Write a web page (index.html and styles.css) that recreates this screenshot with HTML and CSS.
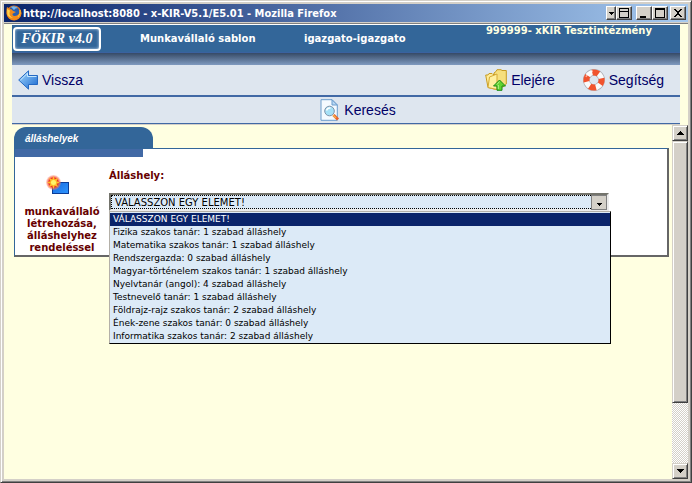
FILE: index.html
```
<!DOCTYPE html>
<html lang="hu">
<head>
  <meta charset="UTF-8" />
  <title>x-KIR-V5.1/E5.01</title>
  <link rel="stylesheet" href="styles.css">
</head>
<body>
  <div class="window">
    <div class="titlebar">
      <svg class="fox" viewBox="0 0 16 16">
        <circle cx="8" cy="8" r="7.5" fill="#e8761a"/>
        <circle cx="8" cy="6.5" r="5.3" fill="#2c5fae"/>
        <path d="M5 2 Q8 0 12 3 Q9 3 8 5Z" fill="#78b7ea"/>
        <path d="M1 2 L4 4 Q6 4 7 6 L10 7 L7 8.5 Q6 9 7 10.5 Q10 12 13 9 Q15 6 13 3 Q17 8 14 12 Q10 17 4 14 Q-1 10 1 2Z" fill="#f28a1c"/>
        <path d="M1 4 L4 5.5 L3.5 8 Q3 11 7 13 Q3.5 13 1.5 10Z" fill="#ffd34a"/>
        <path d="M14 5 Q15 9 12 12" fill="none" stroke="#ffc83a"/>
      </svg>
      <span class="title">http://localhost:8080 - x-KIR-V5.1/E5.01 - Mozilla Firefox</span>
      <div class="win-buttons">
        <button type="button" class="win-btn narrow" aria-label="Menu"><svg viewBox="0 0 5 10"><path d="M0 4h5v1h-1v1h-1v1h-1v-1h-1v-1h-1z"/></svg></button>
        <button type="button" class="win-btn tray" aria-label="Tray"><svg viewBox="0 0 10 10"><path d="M0 0h10v10h-10zM1 1v2h8v-2zM1 4v5h8v-5z" fill-rule="evenodd"/></svg></button>
        <button type="button" class="win-btn" aria-label="Minimize"><svg viewBox="0 0 10 10"><path d="M1 8h6v2h-6z"/></svg></button>
        <button type="button" class="win-btn max" aria-label="Maximize"><svg viewBox="0 0 10 10"><path d="M0 0h10v10h-10zM1 2v7h8v-7z" fill-rule="evenodd"/></svg></button>
        <button type="button" class="win-btn" aria-label="Close"><svg viewBox="0 0 10 10"><path d="M1 1h2v1h1v1h2v-1h1v-1h2v1h-1v1h-1v1h-1v2h1v1h1v1h1v1h-2v-1h-1v-1h-2v1h-1v1h-2v-1h1v-1h1v-1h1v-2h-1v-1h-1v-1h-1z"/></svg></button>
      </div>
    </div>

    <div class="page">
      <div class="top">
        <header class="header">
          <div class="logo">FÖKIR v4.0</div>
          <span>Munkavállaló sablon</span>
          <span>igazgato-igazgato</span>
          <span class="school">999999- xKIR Tesztintézmény</span>
        </header>
        <div class="shade"></div>
        <nav class="toolbar">
          <a class="tool" href="#">
            <svg class="arrow" viewBox="0 0 20 20">
              <defs><linearGradient id="blue" x2="1" y2="1"><stop offset="0" stop-color="#a8dcff"/><stop offset="1" stop-color="#1767cf"/></linearGradient></defs>
              <path d="M.7 10 L10.5.8 V5.5 H19.5 V14.5 H10.5 V19.2Z" fill="url(#blue)" stroke="#2469c4"/>
              <path d="M2.5 10 L9.5 3.2 V6.5 H18.5" fill="none" stroke="#c4e8ff"/>
            </svg>
            Vissza
          </a>
          <a class="tool push" href="#">
            <svg class="icon" viewBox="0 0 22 22">
              <path d="M9 4 L11 2.5 L12 .7 H16 L17 1.5 H21.3 V15 L18 18 H9Z" fill="#f6df7d" stroke="#c79b20"/>
              <path d="M.7 6 H3 L4 4.5 H7 L8 5.5 H11 V20.5 L3 18.5Z" fill="#ffec98" stroke="#c79b20"/>
              <path d="M3 18.5 L4.5 8 L12 5 V20.5Z" fill="#fff0a0" stroke="#d4aa36"/>
              <path d="M14.5 11 L20.5 17 H17 V21.3 H12 V17 H8.5Z" fill="#62d32f" stroke="#198b16"/>
              <path d="M14.5 12.5 L12 15.5 M13.3 16 V20" stroke="#b8f58b" fill="none"/>
            </svg>
            Elejére
          </a>
          <a class="tool" href="#">
            <svg class="icon" viewBox="0 0 22 22">
              <circle cx="11" cy="11" r="7.6" fill="none" stroke="#a9aab0" stroke-width="6.6"/>
              <circle cx="11" cy="11" r="7.6" fill="none" stroke="#fafafa" stroke-width="5.4"/>
              <circle cx="11" cy="11" r="7.6" fill="none" stroke="#f1532d" stroke-width="6" stroke-dasharray="6.5 5.44" stroke-dashoffset="2"/>
              <path d="M3 8 Q5 3 10 2" fill="none" stroke="#fff" stroke-opacity=".5" stroke-width="1.5"/>
            </svg>
            Segítség
          </a>
        </nav>
        <nav class="toolbar search">
          <a class="tool" href="#">
            <svg class="doc" viewBox="0 0 20 22">
              <path d="M1 .7 H12 L17.3 6 V21.3 H1Z" fill="#f4faff" stroke="#6c9dcc"/>
              <path d="M12 .7 V6 H17.3Z" fill="#b9d8f4" stroke="#6c9dcc"/>
              <path d="M13.5 16 L18 20.5" stroke="#e8632b" stroke-width="3"/>
              <path d="M13 16 L16 19" stroke="#f7b04b" stroke-width="1.5"/>
              <circle cx="9.5" cy="12" r="4.8" fill="#a5e0f6" stroke="#7f92a8"/>
              <path d="M6.5 11.5 Q7.5 8.5 10.5 9" fill="none" stroke="#fff" stroke-width="1.5"/>
            </svg>
            Keresés
          </a>
        </nav>
      </div>

      <div class="frame">
        <main class="content">
          <h1 class="tab">álláshelyek</h1>
          <div class="panel">
            <div class="strip"></div>
            <div class="panel-body">
              <a class="action" href="#">
                <svg viewBox="0 0 24 20">
                  <defs>
                    <linearGradient id="box" x2="1" y2="1"><stop offset="0" stop-color="#1768dc"/><stop offset="1" stop-color="#2f96ff"/></linearGradient>
                    <radialGradient id="glow"><stop offset=".6" stop-color="#f03a20"/><stop offset="1" stop-color="#ff8a70" stop-opacity=".3"/></radialGradient>
                  </defs>
                  <rect x="6.5" y="7.5" width="16" height="11" fill="url(#box)" stroke="#0b3c96"/>
                  <circle cx="7.5" cy="7.5" r="7.5" fill="url(#glow)"/>
                  <path d="M7.5 1 L8.7 4.6 L12 3 L10.5 6.3 L14 7.5 L10.5 8.7 L12 12 L8.7 10.5 L7.5 14 L6.3 10.5 L3 12 L4.6 8.7 L1 7.5 L4.6 6.3 L3 3 L6.3 4.6Z" fill="#ffc329"/>
                  <circle cx="7.5" cy="7.5" r="2.5" fill="#fff36a"/>
                </svg>
                munkavállaló létrehozása, álláshelyhez rendeléssel
              </a>
              <form class="field">
                <label for="allashely">Álláshely:</label>
                <div class="combo">
                  <select id="allashely">
                    <option>VÁLASSZON EGY ELEMET!</option>
                  </select>
                  <span class="combo-arrow"><svg viewBox="0 0 5 3"><path d="M0 0h5v1h-1v1h-1v1h-1v-1h-1v-1h-1z"/></svg></span>
                  <ul class="options" role="listbox" aria-label="Álláshely">
                    <li class="selected" role="option" aria-selected="true">VÁLASSZON EGY ELEMET!</li>
                    <li role="option">Fizika szakos tanár: 1 szabad álláshely</li>
                    <li role="option">Matematika szakos tanár: 1 szabad álláshely</li>
                    <li role="option">Rendszergazda: 0 szabad álláshely</li>
                    <li role="option">Magyar-történelem szakos tanár: 1 szabad álláshely</li>
                    <li role="option">Nyelvtanár (angol): 4 szabad álláshely</li>
                    <li role="option">Testnevelő tanár: 1 szabad álláshely</li>
                    <li role="option">Földrajz-rajz szakos tanár: 2 szabad álláshely</li>
                    <li role="option">Ének-zene szakos tanár: 0 szabad álláshely</li>
                    <li role="option">Informatika szakos tanár: 2 szabad álláshely</li>
                  </ul>
                </div>
              </form>
            </div>
          </div>
        </main>
        <div class="scrollbar">
          <button type="button" class="scroll-btn" aria-label="Up"><svg viewBox="0 0 7 4"><path d="M3 0h1v1h1v1h1v1h1v1h-7v-1h1v-1h1v-1h1z"/></svg></button>
          <div class="thumb"></div>
          <div class="track"></div>
          <button type="button" class="scroll-btn" aria-label="Down"><svg viewBox="0 0 7 4"><path d="M0 0h7v1h-1v1h-1v1h-1v1h-1v-1h-1v-1h-1v-1h-1z"/></svg></button>
        </div>
      </div>
    </div>
  </div>
</body>
</html>
```
FILE: styles.css
```
* {
  box-sizing: border-box;
}
body {
  margin: 0;
  font-family: "DejaVu Sans", Verdana, sans-serif;
}
svg {
  display: block;
  flex: none;
}
a {
  text-decoration: none;
}
button {
  padding: 0;
  background: #d4d0c8;
}
.window {
  display: flex;
  flex-direction: column;
  height: 100vh;
  padding: 2px 2px 3px;
  background: #d4d0c8;
  border: 1px solid #d4d0c8;
  border-right-color: #404040;
  border-bottom-color: #404040;
  box-shadow: inset 1px 1px #fff, inset -1px -1px #808080;
}

/* title bar */
.titlebar {
  display: flex;
  align-items: center;
  flex: none;
  height: 20px;
  margin: 0 1px;
  padding: 0 2px 0 2px;
  border-top: 1px solid #d4d0c8;
  border-bottom: 1px solid #d4d0c8;
  background: linear-gradient(90deg, #0a246a, #a6caf0);
  color: #fff;
}
.fox {
  width: 16px;
  height: 16px;
}
.title {
  flex: 1;
  padding-left: 1px;
  font: bold 11px "DejaVu Sans Condensed", Tahoma, sans-serif;
  white-space: nowrap;
}
.win-buttons {
  display: flex;
}
.win-btn {
  display: flex;
  align-items: center;
  justify-content: center;
  width: 16px;
  height: 14px;
  border: 1px solid;
  border-color: #fff #404040 #404040 #fff;
  box-shadow: inset -1px -1px #808080;
}
.win-btn svg {
  width: 10px;
  height: 10px;
}
.win-btn.narrow {
  width: 10px;
}
.win-btn.narrow svg {
  width: 5px;
}
.win-btn.tray {
  margin-right: 4px;
}
.win-btn.max {
  margin-right: 2px;
}

/* page */
.page {
  display: flex;
  flex-direction: column;
  flex: 1;
  min-height: 0;
  margin: 0 1px;
  border-top: 1px solid #808080;
  background: #ffffe1;
}
.top {
  margin: 0 8px;
  border-top: 1px solid #fff;
  border-bottom: 1px solid #d4d0c8;
}
.header {
  display: grid;
  grid-template-columns: 128px 164px 1fr auto;
  align-items: center;
  height: 27px;
  padding-right: 28px;
  background: #336699;
  color: #fff;
  font-size: 10px;
  font-weight: bold;
}
.header .school {
  align-self: start;
  color: #ffffe1;
}
.logo {
  width: 88px;
  height: 24px;
  margin-left: 1px;
  border: 2px solid #fff;
  border-radius: 4px;
  box-shadow: inset 0 0 3px #c8dcf0;
  font: italic bold 14px/20px "Liberation Serif", serif;
  text-align: center;
}
.shade {
  height: 13px;
  border-top: 1px solid #3a62a0;
  background: linear-gradient(#364a66, #7f9abf);
}
.toolbar {
  display: flex;
  align-items: center;
  height: 32px;
  padding: 0 16px 0 6px;
  gap: 28px;
  background: #dee6ef;
  border-bottom: 2px solid #4169a5;
}
.toolbar.search {
  justify-content: center;
  height: 27px;
  padding: 0 0 0 24px;
  border-bottom-width: 1px;
}
.tool {
  display: flex;
  align-items: center;
  gap: 4px;
  color: #000066;
  font: 14px "Liberation Sans", Arial, sans-serif;
}
.tool.push {
  margin-left: auto;
}
.tool .arrow {
  width: 20px;
  height: 20px;
}
.tool .icon {
  width: 22px;
  height: 22px;
}
.tool .doc {
  width: 20px;
  height: 22px;
}

/* frame */
.frame {
  display: flex;
  flex: 1;
  min-height: 0;
}
.content {
  flex: 1;
  padding: 2px 3px 0 10px;
}
.tab {
  width: 139px;
  height: 21px;
  margin: 0;
  padding-left: 11px;
  border-radius: 12px 12px 0 0;
  background: #336699;
  color: #fff;
  font: italic bold 10px/24px "Liberation Sans", Arial, sans-serif;
}
.panel {
  border: 1px solid #336699;
  border-right: 2px solid #666;
  border-bottom: 2px solid #666;
  background: #fff;
}
.strip {
  width: 128px;
  height: 8px;
  background: #4169a5;
}
.panel-body {
  display: flex;
  padding-bottom: 1px;
}
.action {
  display: flex;
  flex-direction: column;
  align-items: center;
  gap: 11px;
  width: 94px;
  padding-top: 18px;
  color: #660000;
  font-size: 10px;
  font-weight: bold;
  line-height: 12px;
  text-align: center;
}
.action svg {
  width: 24px;
  height: 20px;
  margin-right: 8px;
}
.field {
  flex: 1;
  padding: 13px 58px 0 0;
}
.field label {
  display: block;
  height: 23px;
  color: #660000;
  font-size: 10px;
  font-weight: bold;
  line-height: 12px;
}
.combo {
  position: relative;
  font-size: 10px;
}
.combo select {
  display: block;
  appearance: none;
  width: 100%;
  height: 18px;
  padding: 1px 20px 0 4px;
  border: 2px solid;
  border-color: #74746c #ececec #ececec #74746c;
  border-radius: 0;
  outline: 1px dotted #000;
  outline-offset: -3px;
  background: #dceaf7;
  color: #000;
  font: 10px "DejaVu Sans", Verdana, sans-serif;
}
.combo-arrow {
  position: absolute;
  top: 2px;
  right: 2px;
  display: flex;
  align-items: center;
  justify-content: center;
  width: 16px;
  height: 15px;
  padding-top: 3px;
  border: 1px solid #808080;
  background: #d4d0c8;
  pointer-events: none;
}
.combo-arrow svg {
  width: 5px;
  height: 3px;
}
.options {
  position: absolute;
  top: 100%;
  left: 0;
  right: -2px;
  margin: 0;
  padding: 1px 0 0;
  border: 1px solid;
  border-color: #b4b0a8 #000 #000 #b4b0a8;
  background: #dceaf7;
  list-style: none;
  font-size: 9px;
  line-height: 13px;
}
.options li {
  padding-left: 3px;
  white-space: nowrap;
}
.options .selected {
  background: #0a246a;
  color: #fff;
}

/* scrollbar */
.scrollbar {
  display: flex;
  flex-direction: column;
  width: 16px;
}
.scroll-btn {
  display: flex;
  align-items: center;
  justify-content: center;
  flex: none;
  height: 16px;
  border: 1px solid;
  border-color: #d4d0c8 #404040 #404040 #d4d0c8;
  box-shadow: inset 1px 1px #fff, inset -1px -1px #808080;
}
.scroll-btn svg {
  width: 7px;
  height: 4px;
}
.thumb {
  flex: 262;
  border: 1px solid;
  border-color: #d4d0c8 #404040 #404040 #d4d0c8;
  box-shadow: inset 1px 1px #fff, inset -1px -1px #808080;
  background: #d4d0c8;
}
.track {
  flex: 60;
  background: repeating-conic-gradient(#fff 0 25%, #d4d0c8 0 50%) 0 0 / 2px 2px;
}
```
